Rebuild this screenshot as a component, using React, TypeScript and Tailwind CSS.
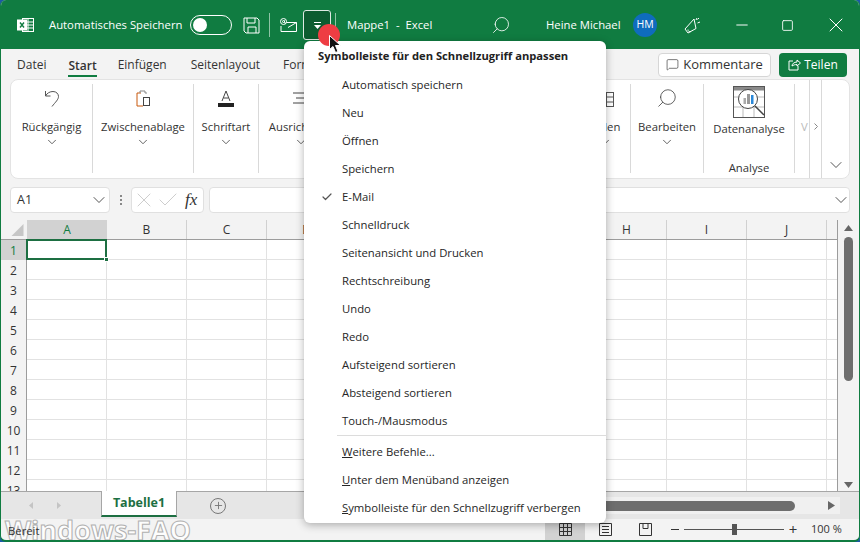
import { Check, ChevronDown, Minus, Search, Square, X, MessageSquare, Plus } from "lucide-react"

const font = { fontFamily: '"Open Sans", "Noto Sans", sans-serif' }

const menuItems: { label: string; checked?: boolean }[] = [
  { label: "Automatisch speichern" },
  { label: "Neu" },
  { label: "Öffnen" },
  { label: "Speichern" },
  { label: "E-Mail", checked: true },
  { label: "Schnelldruck" },
  { label: "Seitenansicht und Drucken" },
  { label: "Rechtschreibung" },
  { label: "Undo" },
  { label: "Redo" },
  { label: "Aufsteigend sortieren" },
  { label: "Absteigend sortieren" },
  { label: "Touch-/Mausmodus" },
]

const columns = ["A", "B", "C", "D", "E", "F", "G", "H", "I", "J", ""]
const rows = [1, 2, 3, 4, 5, 6, 7, 8, 9, 10, 11, 12, 13]

function TitleBar() {
  return (
    <div className="h-[49px] shrink-0 pt-px bg-[#107c41] text-white flex items-center text-[11.3px]">
      <svg className="ml-[16px] w-[17px] h-[16px] shrink-0" viewBox="0 0 17 16" fill="none" stroke="white">
        <rect x="5.5" y="1.5" width="11" height="13" />
        <path d="M5.5 5h11M5.5 8h11M5.5 11h11M11 1.5v13" />
        <rect x="0.5" y="3" width="9" height="10" fill="white" />
        <path d="M3 5.5l4 5M7 5.5l-4 5" stroke="#107c41" strokeWidth="1.4" />
      </svg>
      <span className="ml-[15px] w-[141px] whitespace-nowrap">Automatisches Speichern</span>
      <div className="w-[42px] h-[20px] rounded-full border border-white flex items-center pl-[2px]">
        <span className="w-[14px] h-[14px] rounded-full bg-white" />
      </div>
      <svg className="ml-[11px] w-[17px] h-[17px] shrink-0" viewBox="0 0 17 17" fill="none" stroke="white">
        <path d="M1 1h13l2 2v13H3l-2-2z" />
        <path d="M4 1v5h8V1M5 16v-6h8v6" />
      </svg>
      <span className="ml-[9px] w-px h-[24px] bg-[#8fc3a5]" />
      <svg className="ml-[10px] w-[17px] h-[14px] shrink-0" viewBox="0 0 17 14" fill="none" stroke="white">
        <path d="M6.500 4.500h10v9h-15.500V8" />
        <path d="M16.500 4.500L8 9.500" />
        <circle cx="3.500" cy="3.500" r="3" />
        <circle cx="3.500" cy="3.500" r="1" />
        <path d="M4.500 2.500v2c0 1 1.500 1 2 0" />
      </svg>
      <div className="ml-[6px] self-start mt-[9px] w-[28px] h-[30px] rounded-[3px] border border-[#dfe9e3] bg-[#0c5c30] flex flex-col items-center justify-center gap-[2px]">
        <span className="w-[7px] h-px bg-white" />
        <svg className="w-[7px] h-[4px]" viewBox="0 0 7 4" fill="white">
          <path d="M0 0h7L3.500 4z" />
        </svg>
      </div>
      <span className="ml-[4px] w-px h-[24px] bg-[#8fc3a5]" />
      <span className="ml-[11px] w-[87px] whitespace-pre">Mappe1  -  Excel</span>
      <Search className="ml-[57px] w-[20px] h-[20px] -scale-x-100" strokeWidth={1} />
      <span className="ml-[35px] w-[76px] whitespace-nowrap">Heine Michael</span>
      <span className="ml-[11px] w-[24px] h-[24px] rounded-full bg-[#0f6cbd] flex items-center justify-center text-[10.5px]">HM</span>
      <svg className="ml-[27px] w-[17px] h-[17px] shrink-0" viewBox="0 0 17 17" fill="none" stroke="white">
        <path d="M10 2L1 12l3 4 8-4.500z" />
        <path d="M4 12.500a2 2 0 0 0 3 2M13 1l-1 2M16 5l-2.500 1M15 1l-1.500 1.500" />
      </svg>
      <Minus className="ml-[32px] w-[18px] h-[18px]" strokeWidth={1.3} />
      <Square className="ml-[30px] w-[13px] h-[13px]" strokeWidth={1.6} />
      <X className="ml-[30px] w-[24px] h-[24px]" strokeWidth={1} />
    </div>
  )
}

function TabBar() {
  return (
    <div className="h-[30px] shrink-0 flex items-center text-[12px] text-[#333] pl-[16px] pr-[12px] pt-px">
      <span>Datei</span>
      <span className="ml-[22px] font-semibold border-b-2 border-[#107c41] h-[21px] leading-[19px] mt-[3px]">Start</span>
      <span className="ml-[21px]">Einfügen</span>
      <span className="ml-[24px]">Seitenlayout</span>
      <span className="ml-[23px]">Formeln</span>
      <div className="ml-auto w-[113px] h-[24px] rounded-[4px] border border-[#d6d6d6] bg-white flex items-center justify-center gap-[4px] text-[13px]">
        <MessageSquare className="w-[13px] h-[13px]" strokeWidth={1.2} />
        <span>Kommentare</span>
      </div>
      <div className="ml-[8px] w-[68px] h-[24px] rounded-[4px] bg-[#107c41] text-white flex items-center justify-center gap-[3px] text-[12px]">
        <svg className="w-[13px] h-[13px]" viewBox="0 0 13 13" fill="none" stroke="white">
          <path d="M5 3H1v9h9V8" />
          <path d="M4 8c0-2 2-4 5-4V2l3.500 3L9 8V6.500C7 6.500 5.500 7 4 8z" />
        </svg>
        <span className="font-medium">Teilen</span>
      </div>
    </div>
  )
}

function RibbonGroup({ label, width, icon }: { label: string; width: string; icon: React.ReactNode }) {
  return (
    <div className={`${width} shrink-0 h-[89px] pt-[2px] border-r border-[#d9d9d9] flex flex-col items-center text-[11.3px] text-[#333]`}>
      <div className="h-[24px] flex items-center justify-center">{icon}</div>
      <span className="mt-[9px] whitespace-nowrap">{label}</span>
      <ChevronDown className="-mt-px w-[14px] h-[14px]" strokeWidth={1.3} />
    </div>
  )
}

function Ribbon() {
  return (
    <div className="h-[100px] shrink-0 mx-[9px] rounded-[8px] bg-white border border-[#e3e3e3] flex items-start pt-[4px] overflow-hidden">
      <RibbonGroup
        width="w-[82px]"
        label="Rückgängig"
        icon={
          <svg className="w-[16px] h-[17px]" viewBox="0 0 16 17" fill="none" stroke="#555">
            <path d="M1.500 1v5h5" />
            <path d="M1.500 6C3 3 6 1.500 9 1.500c3.500 0 5.500 2.500 5.500 5 0 3-3 5.500-6.500 10" />
          </svg>
        }
      />
      <RibbonGroup
        width="w-[101px]"
        label="Zwischenablage"
        icon={
          <svg className="w-[15px] h-[17px]" viewBox="0 0 15 17" fill="none">
            <path d="M5 3H1v13h6" stroke="#c8590d" />
            <path d="M4 3V1h5v2h2" stroke="#888" />
            <rect x="7.500" y="7.500" width="6" height="8" stroke="#444" />
          </svg>
        }
      />
      <RibbonGroup
        width="w-[65px]"
        label="Schriftart"
        icon={
          <svg className="w-[16px] h-[17px]" viewBox="0 0 16 17" fill="none">
            <path d="M4 11L8 1l4 10M5.500 8h5" stroke="#444" />
            <rect x="0" y="13" width="16" height="4" fill="#222" />
          </svg>
        }
      />
      <RibbonGroup
        width="w-[84px]"
        label="Ausrichtung"
        icon={
          <svg className="w-[15px] h-[15px]" viewBox="0 0 15 15" stroke="#444">
            <path d="M0 2h15M3 7h12M0 12h15" />
          </svg>
        }
      />
      <div className="ml-auto flex">
        <RibbonGroup
          width="w-[52px]"
          label="Zellen"
          icon={
            <svg className="w-[18px] h-[17px]" viewBox="2 0 18 17" fill="none" stroke="#555">
              <rect x="5.500" y="2.500" width="14" height="14" />
              <path d="M5.500 7h14M5.500 12h14M12.500 2.500v14" />
              <rect x="6" y="3" width="6" height="13" fill="#2b88d8" fillOpacity="0.5" stroke="none" />
            </svg>
          }
        />
        <RibbonGroup
          width="w-[73px]"
          label="Bearbeiten"
          icon={<Search className="w-[22px] h-[22px] text-[#444] -scale-x-100" strokeWidth={0.9} />}
        />
        <div className="w-[91px] h-[89px] pt-[2px] border-r border-[#d9d9d9] flex flex-col items-center text-[11.3px] text-[#333]">
          <svg className="w-[32px] h-[32px] shrink-0" viewBox="0 0 32 32" fill="none">
            <rect x="0.500" y="0.500" width="31" height="31" fill="white" stroke="#555" />
            <rect x="1" y="1" width="30" height="3.500" fill="#8a8a8a" />
            <path d="M1 11h30M1 21h30M10 5v26M21 5v26" stroke="#bbb" />
            <circle cx="15" cy="13" r="9.500" fill="white" stroke="#444" />
            <rect x="10.500" y="12" width="2.500" height="6" fill="#aaa" />
            <rect x="14" y="8" width="3" height="10" fill="#999" />
            <rect x="18" y="9" width="2.500" height="9" fill="#2b88d8" />
            <path d="M22 20l9 9" stroke="#444" strokeWidth="1.500" />
          </svg>
          <span className="mt-[3px] shrink-0">Datenanalyse</span>
          <span className="mt-[22px] shrink-0">Analyse</span>
        </div>
        <div className="w-[15px] h-[98px] border-r border-[#d9d9d9] -mt-[4px] pt-[39px] pl-[6px] text-[11.3px] text-[#bbb] overflow-hidden">V</div>
        <div className="w-[12px] h-[98px] border-r border-[#d9d9d9] -mt-[4px] pt-[43px] flex justify-center">
          <svg className="w-[4px] h-[7px]" viewBox="0 0 4 7" fill="none" stroke="#888">
            <path d="M0.500 0.500l3 3-3 3" />
          </svg>
        </div>
        <div className="w-[27px] h-[98px] -mt-[4px] flex items-end justify-center pb-[3px]">
          <ChevronDown className="w-[20px] h-[20px] text-[#333]" strokeWidth={1} />
        </div>
      </div>
    </div>
  )
}

function FormulaBar() {
  return (
    <div className="h-[26px] shrink-0 mt-[8px] mx-[9px] flex items-stretch text-[12.5px] text-[#333]">
      <div className="w-[100px] rounded-[4px] border border-[#e0e0e0] bg-white flex items-center justify-between pl-[6px]">
        <span>A1</span>
        <ChevronDown className="w-[20px] h-[20px]" strokeWidth={1} />
      </div>
      <div className="w-[21px] flex flex-col items-center justify-center gap-[2px]">
        <span className="w-[2px] h-[2px] bg-[#888]" />
        <span className="w-[2px] h-[2px] bg-[#888]" />
        <span className="w-[2px] h-[2px] bg-[#888]" />
      </div>
      <div className="w-[73px] rounded-[4px] border border-[#e0e0e0] bg-white flex items-center text-[#c2c2c2]">
        <X className="w-[24px] h-[24px] shrink-0" strokeWidth={0.8} />
        <Check className="w-[24px] h-[24px] shrink-0" strokeWidth={0.8} />
        <span className="ml-[5px] italic text-[#333] text-[17px] font-medium" style={{ fontFamily: '"Liberation Serif", serif' }}>
          fx
        </span>
      </div>
      <div className="ml-[5px] flex-1 rounded-[4px] border border-[#e0e0e0] bg-white flex items-center justify-end">
        <ChevronDown className="-mr-[2px] w-[20px] h-[20px]" strokeWidth={1} />
      </div>
    </div>
  )
}

function Sheet() {
  return (
    <div className="flex-1 min-h-0 mt-[7px] flex">
      <div className="flex-1 min-w-0 flex flex-col overflow-hidden border-r border-[#9c9c9c]">
        <div className="h-[20px] shrink-0 flex border-b border-[#9c9c9c] text-[12px] text-[#333]">
          <div className="w-[26px] shrink-0 flex items-end justify-end">
            <svg className="w-[13px] h-[12px] mr-[3px] mb-[3px]" viewBox="0 0 13 13" fill="#c6c6c6">
              <path d="M13 0v13H0z" />
            </svg>
          </div>
          {columns.map((c, i) => (
            <div
              key={c + i}
              className={
                i === 0
                  ? "w-[80px] shrink-0 bg-[#d2d2d2] text-[#107c41] flex items-center justify-center"
                  : "w-[80px] shrink-0 border-r border-[#d0d0d0] flex items-center justify-center"
              }
            >
              {c}
            </div>
          ))}
        </div>
        {rows.map(r => (
          <div key={r} className="h-[20px] shrink-0 flex text-[12px] text-[#333]">
            <div
              className={
                r === 1
                  ? "w-[26px] shrink-0 pt-px bg-[#d2d2d2] text-[#107c41] border-r border-[#9c9c9c] flex items-center justify-center"
                  : "w-[26px] shrink-0 pt-px border-r border-[#9c9c9c] flex items-center justify-center"
              }
            >
              {r}
            </div>
            {columns.map((c, i) => (
              <div
                key={c + i}
                className={
                  r === 1 && i === 0
                    ? "w-[80px] shrink-0 bg-white relative z-10"
                    : "w-[80px] shrink-0 bg-white border-r border-b border-[#e2e2e2]"
                }
              >
                {r === 1 && i === 0 && (
                  <>
                    <span className="absolute -left-px -top-px w-[81px] h-[21px] border-2 border-[#1d6f42]" />
                    <span className="absolute -right-[2px] -bottom-[2px] w-[5px] h-[5px] bg-[#1d6f42] border border-white" />
                  </>
                )}
              </div>
            ))}
          </div>
        ))}
      </div>
      <div className="w-[21px] shrink-0 flex flex-col items-center pt-[5px] pb-[3px]">
        <svg className="w-[9px] h-[6px]" viewBox="0 0 9 6" fill="#666">
          <path d="M4.500 0L9 6H0z" />
        </svg>
        <span className="mt-[6px] w-[9px] h-[144px] rounded-full bg-[#6e6e6e]" />
        <svg className="mt-auto w-[9px] h-[6px]" viewBox="0 0 9 6" fill="#666">
          <path d="M0 0h9L4.500 6z" />
        </svg>
      </div>
    </div>
  )
}

function SheetTabs() {
  return (
    <div className="h-[28px] shrink-0 flex items-stretch border-t border-[#a6a6a6] bg-[#e6e6e6]">
      <div className="w-[100px] flex items-center pl-[28px] gap-[24px] text-[#c4c4c4]">
        <svg className="w-[4px] h-[7px]" viewBox="0 0 4 7" fill="currentColor">
          <path d="M4 0v7L0 3.500z" />
        </svg>
        <svg className="w-[4px] h-[7px]" viewBox="0 0 4 7" fill="currentColor">
          <path d="M0 0v7l4-3.500z" />
        </svg>
      </div>
      <div className="w-[76px] -mt-px mb-[2px] pt-px bg-white border-x border-[#a6a6a6] border-b-2 border-b-[#1d6f42] flex items-center justify-center text-[12.5px] font-bold text-[#1d6f42]">
        Tabelle1
      </div>
      <div className="ml-[33px] flex items-center">
        <span className="w-[16px] h-[16px] rounded-full border border-[#777] flex items-center justify-center">
          <Plus className="w-[11px] h-[11px] text-[#777]" strokeWidth={2} />
        </span>
      </div>
      <div className="ml-auto mr-[19px] my-[5px] w-[245px] bg-[#f0f0f0] flex items-center justify-end pr-[5px]">
        <span className="w-[200px] h-[10px] rounded-r-full bg-[#6e6e6e]" />
        <svg className="ml-[33px] w-[7px] h-[9px]" viewBox="0 0 7 9" fill="#666">
          <path d="M0 0l7 4.500L0 9z" />
        </svg>
      </div>
    </div>
  )
}

function StatusBar() {
  return (
    <div className="h-[21px] shrink-0 flex items-center text-[11.3px] text-[#333] relative">
      <span className="absolute left-[4px] -top-[3px] text-[27px] leading-none font-bold text-white/80 pointer-events-none [-webkit-text-stroke:1px_#b0b0b0]">
        Windows-FAQ
      </span>
      <span className="relative ml-[7px] pt-[3px]">Bereit</span>
      <div className="ml-auto flex items-center">
        <div className="w-[40px] h-[21px] bg-[#d2d2d2] flex items-center justify-center">
          <svg className="w-[13px] h-[13px]" viewBox="0 0 13 13" fill="none" stroke="#333">
            <path d="M0.500 0.500h12v12h-12zM0.500 4.500h12M0.500 8.500h12M4.500 0.500v12M8.500 0.500v12" />
          </svg>
        </div>
        <svg className="ml-[14px] w-[13px] h-[13px]" viewBox="0 0 13 13" fill="none" stroke="#333">
          <path d="M0.500 0.500h12v12h-12zM3 3.500h7M3 6.500h7M3 9.500h7" />
        </svg>
        <svg className="ml-[27px] w-[13px] h-[13px]" viewBox="0 0 13 13" fill="none" stroke="#333">
          <path d="M0.500 0.500h12v12h-12zM4 0.500v5h5v-5" />
        </svg>
        <span className="ml-[19px] w-[8px] h-px bg-[#333]" />
        <div className="ml-[5px] w-[100px] h-px bg-[#555] relative">
          <span className="absolute left-[48px] -top-[5px] w-[5px] h-[11px] bg-[#555]" />
        </div>
        <span className="ml-[3px] w-[12px] text-center text-[15px] leading-none">+</span>
        <span className="ml-[12px] mr-[19px] w-[29px] whitespace-nowrap text-[11px]">100 %</span>
      </div>
    </div>
  )
}

function QuickAccessMenu() {
  return (
    <div className="absolute left-[303px] top-[41px] w-[302px] h-[482px] bg-white rounded-[6px] shadow-[0_2px_8px_rgba(0,0,0,0.3)] text-[11.3px] text-[#262626] overflow-hidden">
      <div className="h-[30px] pl-[14px] flex items-center font-bold text-[11.2px] text-[#222] whitespace-nowrap">
        Symbolleiste für den Schnellzugriff anpassen
      </div>
      {menuItems.map(item => (
        <div key={item.label} className="h-[28px] flex items-center relative pl-[38px]">
          {item.checked && <Check className="absolute left-[17px] w-[12px] h-[12px] text-[#555]" strokeWidth={2.4} />}
          {item.label}
        </div>
      ))}
      <div className="ml-[33px] h-px bg-[#dcdcdc]" />
      <div className="h-[28px] mt-[2px] flex items-center pl-[38px]">
        <span className="underline">W</span>eitere Befehle...
      </div>
      <div className="h-[28px] flex items-center pl-[38px]">
        <span className="underline">U</span>nter dem Menüband anzeigen
      </div>
      <div className="h-[28px] flex items-center pl-[38px]">
        <span className="underline">S</span>ymbolleiste für den Schnellzugriff verbergen
      </div>
    </div>
  )
}

function Pointer() {
  return (
    <>
      <span className="absolute left-[317px] top-[24px] w-[22px] h-[22px] rounded-full bg-[#ee3d43]" />
      <svg className="absolute left-[328px] top-[35px] w-[12px] h-[18px]" viewBox="0 0 12 18">
        <path d="M0.500 0.500v14l3.500-3 2.500 6 2.500-1-2.500-6h5z" fill="#111" stroke="white" />
      </svg>
    </>
  )
}

export default function App() {
  return (
    <div className="w-[860px] h-[542px] bg-[#1c5aa6]">
      <div className="relative w-full h-full rounded-[6px] overflow-hidden bg-[#f3f3f3] flex flex-col border-x border-b-2 border-[#107c41]" style={font}>
        <TitleBar />
        <TabBar />
        <Ribbon />
        <FormulaBar />
        <Sheet />
        <SheetTabs />
        <StatusBar />
        <QuickAccessMenu />
        <Pointer />
      </div>
    </div>
  )
}
